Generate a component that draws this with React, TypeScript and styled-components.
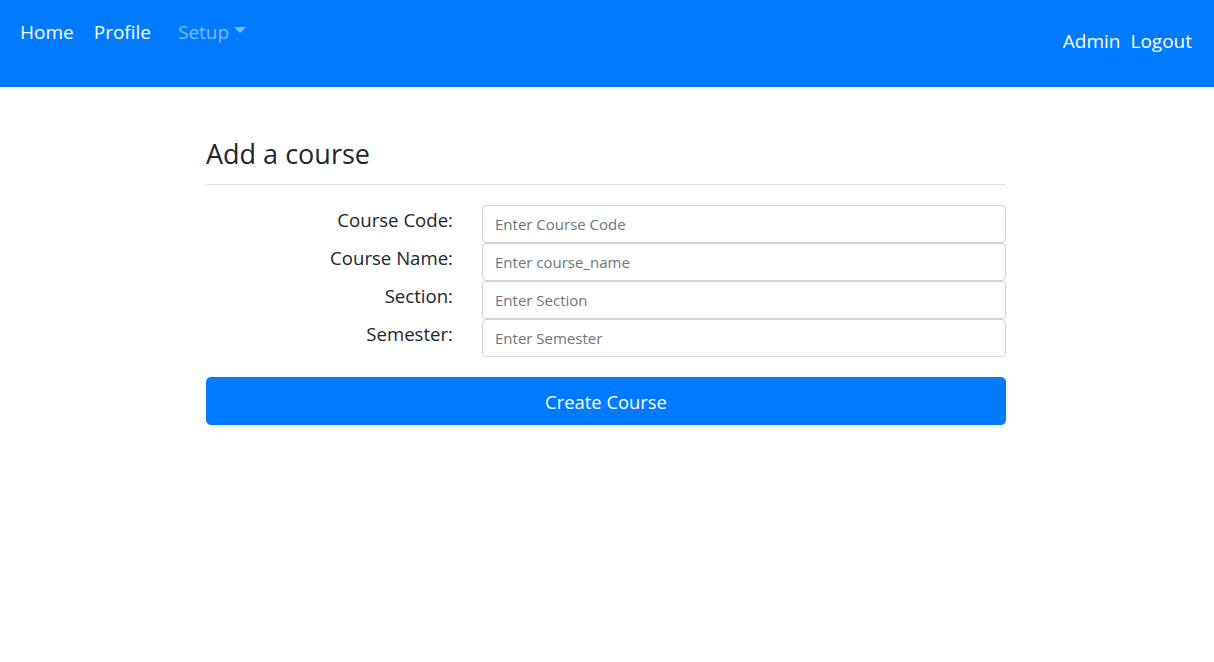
import React from "react";
import styled, { createGlobalStyle } from "styled-components";

const Global = createGlobalStyle`
  html, body { margin: 0; padding: 0; background: #fff; }
  body { font-family: "Open Sans", "Noto Sans", "Liberation Sans", sans-serif; color: #212529; }
  * { box-sizing: border-box; }
`;

const NavBar = styled.nav`
  height: 87px;
  background: #007bff;
  display: flex;
  justify-content: space-between;
  padding: 0 22px 0 20px;
`;

const NavLeft = styled.div`
  display: flex;
  align-items: flex-start;
  padding-top: 18px;
  gap: 20px;
`;

const NavRight = styled.div`
  display: flex;
  align-items: center;
  gap: 10px;
  padding-bottom: 6px;
`;

const NavLink = styled.a<{ $muted?: boolean }>`
  font-size: 19px;
  line-height: 28px;
  color: ${(p) => (p.$muted ? "rgba(255,255,255,0.5)" : "#fff")};
  text-decoration: none;
  display: flex;
  align-items: center;
`;

const Caret = styled.span`
  display: inline-block;
  margin-left: 5px;
  margin-top: -4px;
  width: 0;
  height: 0;
  border-left: 6px solid transparent;
  border-right: 6px solid transparent;
  border-top: 6px solid rgba(255,255,255,0.5);
`;

const Main = styled.main`
  width: 802px;
  padding-right: 2px;
  margin: 0 auto;
  padding-top: 50px;
`;

const Title = styled.h3`
  font-size: 27px;
  font-weight: 400;
  margin: 0;
  line-height: 34px;
`;

const Divider = styled.hr`
  border: 0;
  border-top: 1px solid #dee2e6;
  margin: 13px 0 20px;
`;

const Form = styled.form`
  display: grid;
  grid-template-columns: 247px 1fr;
  column-gap: 29px;
`;

const Label = styled.label`
  text-align: right;
  font-size: 18.6px;
  line-height: 24px;
  padding-top: 3px;
`;

const Input = styled.input`
  height: 38px;
  width: 100%;
  border: 1px solid #ced4da;
  border-radius: 4px;
  padding: 0 12px;
  font-family: inherit;
  font-size: 15px;
  color: #495057;
  &::placeholder { color: #6c757d; }
`;

const Button = styled.button`
  grid-column: 1 / -1;
  margin-top: 20px;
  height: 48px;
  width: 100%;
  border: 0;
  border-radius: 5px;
  background: #007bff;
  color: #fff;
  font-family: inherit;
  font-size: 18.4px;
`;

const fields = [
  ["Course Code:", "Enter Course Code"],
  ["Course Name:", "Enter course_name"],
  ["Section:", "Enter Section"],
  ["Semester:", "Enter Semester"],
];

export default function App() {
  return (
    <>
      <Global />
      <NavBar>
        <NavLeft>
          <NavLink href="#">Home</NavLink>
          <NavLink href="#">Profile</NavLink>
          <NavLink href="#" $muted style={{ marginLeft: 7 }}>
            Setup<Caret />
          </NavLink>
        </NavLeft>
        <NavRight>
          <NavLink href="#">Admin</NavLink>
          <NavLink href="#">Logout</NavLink>
        </NavRight>
      </NavBar>
      <Main>
        <Title>Add a course</Title>
        <Divider />
        <Form onSubmit={(e) => e.preventDefault()}>
          {fields.map(([l, p]) => (
            <React.Fragment key={l}>
              <Label>{l}</Label>
              <Input placeholder={p} />
            </React.Fragment>
          ))}
          <Button type="submit">Create Course</Button>
        </Form>
      </Main>
    </>
  );
}
